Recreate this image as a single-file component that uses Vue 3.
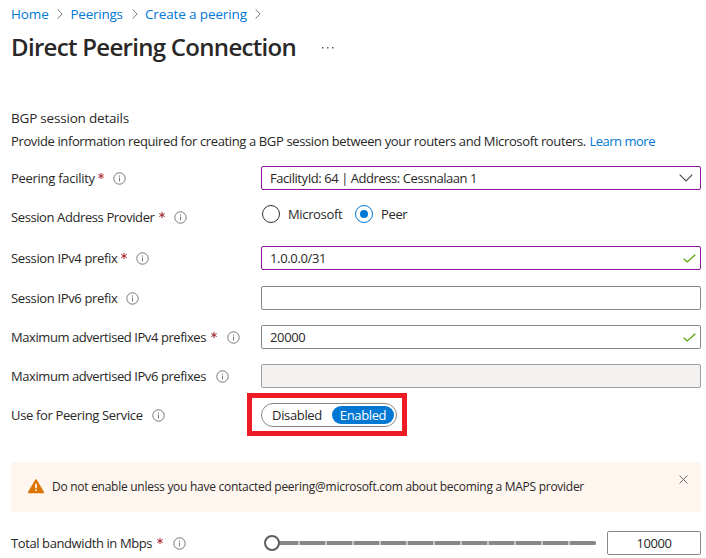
<script setup>
import { ref } from 'vue'

const crumbs = [
  { text: 'Home', cls: 'c-home' },
  { text: 'Peerings', cls: 'c-peerings' },
  { text: 'Create a peering', cls: 'c-create' }
]
const rows = [
  { id: 'facility', label: 'Peering facility', required: true, kind: 'select', value: 'FacilityId: 64 | Address: Cessnalaan 1', tone: 'purple' },
  { id: 'provider', label: 'Session Address Provider', required: true, kind: 'radio' },
  { id: 'v4', label: 'Session IPv4 prefix', required: true, kind: 'text', value: '1.0.0.0/31', tone: 'purple', valid: true },
  { id: 'v6', label: 'Session IPv6 prefix', kind: 'text', value: '', tone: 'gray' },
  { id: 'max4', label: 'Maximum advertised IPv4 prefixes', required: true, kind: 'text', value: '20000', tone: 'gray', valid: true },
  { id: 'max6', label: 'Maximum advertised IPv6 prefixes', kind: 'text', value: '', tone: 'disabled' },
  { id: 'service', label: 'Use for Peering Service', kind: 'toggle' },
  { id: 'bandwidth', label: 'Total bandwidth in Mbps', required: true, kind: 'slider', value: '10000' }
]
const provider = ref('Peer')
const service = ref('Enabled')
const bannerOpen = ref(true)
</script>

<template>
  <main class="page">
    <nav class="crumbs">
      <template v-for="c in crumbs" :key="c.text">
        <a :class="c.cls">{{ c.text }}</a>
        <svg class="crumb-sep" width="6" height="10" viewBox="0 0 6 10"><path d="M.6.5 5.2 5 .6 9.5" /></svg>
      </template>
    </nav>
    <header class="title-row">
      <h1>Direct Peering Connection</h1>
      <svg class="more" width="12" height="2" viewBox="0 0 12 2"><path d="M0 0h1.5v1.5H0zM5 0h1.5v1.5H5zM10 0h1.5v1.5H10z" /></svg>
    </header>
    <h2>BGP session details</h2>
    <p class="intro"><span class="intro-text">Provide information required for creating a BGP session between your routers and Microsoft routers.</span><a>Learn more</a></p>

    <template v-for="r in rows" :key="r.id">
      <div v-if="r.kind === 'slider' && bannerOpen" class="banner">
        <svg class="warn" width="16" height="15" viewBox="0 0 16 15">
          <path d="M7 .9a1.15 1.15 0 0 1 2 0l6.8 11.8c.4.8 0 1.6-.9 1.6H1.1c-.9 0-1.3-.8-.9-1.6z" fill="#db7500" />
          <path d="M7.2 4.8h1.6v4.4H7.2z" fill="#fff" /><path d="M7.2 10.5h1.6v1.6H7.2z" fill="#fff" />
        </svg>
        <span class="banner-text">Do not enable unless you have contacted peering@microsoft.com about becoming a MAPS provider</span>
        <svg class="close" width="9" height="9" viewBox="0 0 9 9" @click="bannerOpen = false"><path d="m.5.5 8 8m0-8-8 8" /></svg>
      </div>
      <div class="row" :class="'row-' + r.id">
        <div class="label">
          <span class="label-text">{{ r.label }}</span>
          <svg v-if="r.required" class="star" width="6" height="6" viewBox="0 0 6 6"><path d="M3 0v6M.3 1.5l5.4 3M5.7 1.5l-5.4 3" /></svg>
          <svg class="info" width="13" height="13" viewBox="0 0 13 13"><circle cx="6.5" cy="6.5" r="5.7" /><path d="M6.5 5.6v3.8M6.5 3.5v1.2" /></svg>
        </div>

        <div v-if="r.kind === 'select' || r.kind === 'text'" class="field" :class="r.tone">
          <span class="value">{{ r.value }}</span>
          <svg v-if="r.kind === 'select'" class="chevron" width="14" height="8" viewBox="0 0 14 8"><path d="m.7.7 6.3 6.2L13.3.7" /></svg>
          <svg v-if="r.valid" class="check" width="13" height="9" viewBox="0 0 13 9"><path d="m.7 4.7 3.5 3.3L12.3.7" /></svg>
        </div>

        <div v-else-if="r.kind === 'radio'" class="radios">
          <label v-for="o in ['Microsoft', 'Peer']" :key="o" :class="'opt-' + o.toLowerCase()" @click="provider = o">
            <i class="radio" :class="{ on: provider === o }"></i><span>{{ o }}</span>
          </label>
        </div>

        <div v-else-if="r.kind === 'toggle'" class="highlight">
          <div class="toggle">
            <span v-for="o in ['Disabled', 'Enabled']" :key="o" class="seg" :class="{ on: service === o }" @click="service = o"><b>{{ o }}</b></span>
          </div>
        </div>

        <div v-else class="slider-box">
          <svg class="slider" width="336" height="16" viewBox="0 0 336 16">
            <rect x="14" y="6" width="321" height="4" rx="1.5" fill="#8a8886" />
            <rect v-for="n in 11" :key="n" :x="10 + n * 27" y="6" width="2" height="4" fill="#c8c6c4" />
            <circle cx="11" cy="8" r="7" fill="#fff" stroke="#605e5c" stroke-width="2" />
          </svg>
          <div class="field gray amount"><span class="value">{{ r.value }}</span></div>
        </div>
      </div>
    </template>
  </main>
</template>

<style>
body { background: #fff; overflow: hidden; }
</style>

<style scoped>
.page { box-sizing: border-box; width: 706px; height: 558px; padding: 4px 5px 0 11px; overflow: hidden; font: 13px/18px "Open Sans", "Noto Sans", sans-serif; letter-spacing: -.35px; color: #292827; }
a { color: #0078d4; }
svg { display: block; flex: none; fill: none; }
.crumbs { display: flex; align-items: center; height: 20px; font-size: 13.5px; letter-spacing: -.13px; white-space: nowrap; }
.c-home { width: 37px; }
.c-peerings { width: 52px; letter-spacing: -.25px; }
.c-create { width: 101px; }
.crumb-sep { margin: 0 8px 0 9px; stroke: #797775; }
.c-home + .crumb-sep { margin-right: 7.5px; }
.c-peerings + .crumb-sep { margin-right: 7.5px; }
.title-row { display: flex; align-items: center; height: 44px; margin-top: 1px; }
h1 { margin: 0; width: 311px; font-size: 24px; line-height: 32px; font-weight: 600; letter-spacing: -.7px; white-space: nowrap; }
.more { margin-top: 2px; }
.more path { fill: #605e5c; }
h2 { margin: 40px 0 0; font-size: 13.5px; line-height: 18px; font-weight: 400; letter-spacing: -.2px; }
.intro { display: flex; margin: 5px 0 0; white-space: nowrap; }
.intro-text { width: 578.5px; letter-spacing: -.37px; }
.intro a { letter-spacing: -.5px; }
.row { display: flex; align-items: center; height: 24px; margin-top: 16px; }
.row-provider { margin-top: 12px; }
.row-provider .label { padding-top: 6px; }
.row-v4 { margin-top: 20px; }
.row-max4, .row-max6, .row-service { margin-top: 15px; }
.row-bandwidth { margin-top: 19px; }
.label { display: flex; align-items: center; width: 250px; flex: none; white-space: nowrap; }
.row-facility .label-text { width: 84px; letter-spacing: -.28px; }
.row-provider .label-text { width: 145px; letter-spacing: -.4px; }
.row-v4 .label-text { width: 107px; }
.row-v6 .label-text { width: 105px; }
.row-max4 .label-text { width: 197px; letter-spacing: -.43px; }
.row-max6 .label-text { width: 195px; letter-spacing: -.43px; }
.row-service .label-text { width: 131px; }
.row-bandwidth .label-text { width: 143px; letter-spacing: -.4px; }
.star { margin: -4px 0 0 3px; stroke: #a4262c; stroke-width: 1; }
.info { margin-left: 9.5px; stroke: #797775; stroke-width: 1; }
.row-v4 .info, .row-facility .info, .row-provider .info { margin-left: 9px; }
.field { box-sizing: border-box; display: flex; align-items: center; width: 440px; height: 24px; padding: 0 4px 0 8px; border: 1px solid #8a8886; border-radius: 2px; white-space: nowrap; }
.field.purple { border-color: #881798; }
.field.disabled { background: #f3f2f1; border-color: #a19f9d; }
.value { flex: 1; }
.row-facility .value { letter-spacing: -.44px; }
.chevron { margin-right: 3px; stroke: #484644; stroke-width: 1.1; }
.check { stroke: #57a300; stroke-width: 1.2; }
.radios { display: flex; padding-left: 1px; }
.radios label { display: flex; align-items: center; }
.opt-microsoft { width: 93px; }
.radio { box-sizing: border-box; display: flex; align-items: center; justify-content: center; width: 18px; height: 18px; margin-right: 8px; border: 1px solid #323130; border-radius: 50%; }
.radio.on { border-color: #0078d4; }
.radio.on::after { content: ""; width: 8px; height: 8px; border-radius: 50%; background: #0078d4; }
.highlight { box-sizing: border-box; width: 160px; height: 43px; flex: none; margin: -1px 0 0 -14px; padding: 5px 4px 4px 9px; border: 5px solid #ed1c24; }
.toggle { box-sizing: border-box; display: flex; align-items: center; width: 136px; height: 24px; padding: 2px; border: 1px solid #8a8886; border-radius: 12px; }
.seg { box-sizing: border-box; width: 68px; height: 18px; text-align: center; line-height: 18px; border-radius: 9px; }
.seg:first-child { padding-right: 2px; }
.seg b { font-weight: 400; }
.seg.on { width: 62px; background: #0078d4; color: #fff; }
.banner { box-sizing: border-box; display: flex; align-items: center; width: 690px; height: 50px; margin-top: 35px; padding: 0 13px 0 17px; border-radius: 2px; background: #fff6ef; }
.warn { margin-top: -2px; }
.banner-text { flex: 1; margin-left: 8px; font-size: 12px; letter-spacing: -.27px; white-space: nowrap; }
.close { margin-bottom: 16px; stroke: #605e5c; stroke-width: .9; }
.slider-box { display: flex; align-items: center; }
.amount { width: 94px; margin-left: 10px; padding: 0; text-align: center; letter-spacing: -.45px; }
</style>
